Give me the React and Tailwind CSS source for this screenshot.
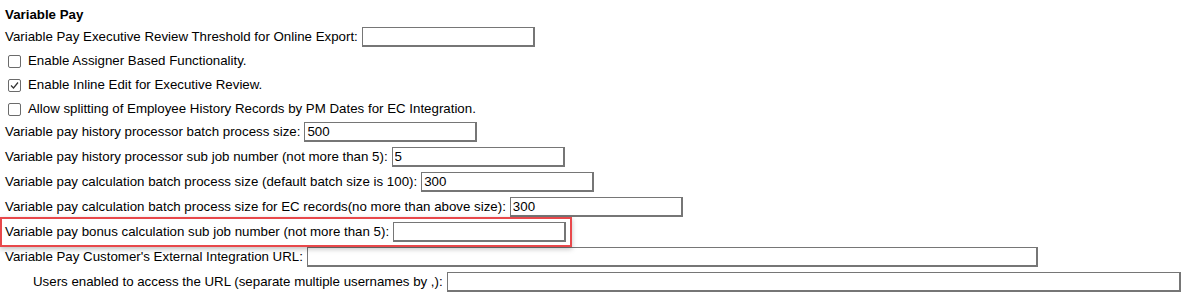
import React from 'react'

const font = { fontFamily: '"Liberation Sans", Arial, sans-serif' }

function Box({ checked }) {
  return (
    <span className="inline-flex w-[13px] h-[13px] border border-[#6b6b6b] rounded-[2px] bg-white items-center justify-center">
      {checked && (
        <svg width="11" height="11" viewBox="0 0 11 11">
          <polyline points="2,5.5 4.5,8 9,2.5" fill="none" stroke="#333" strokeWidth="1.2" />
        </svg>
      )}
    </span>
  )
}

function Field({ value = '', w = 'w-[173px]' }) {
  return (
    <input
      readOnly
      value={value}
      className={`${w} h-[20px] bg-white border border-[#767676] border-r-2 border-b-2 px-[2px] text-[13.3px] text-black outline-none`}
      style={font}
    />
  )
}

function Row({ label, value, w, indent }) {
  return (
    <div className={`flex items-center h-[25px] gap-[4px] ${indent ? 'pl-[28px]' : ''}`}>
      <span>{label}</span>
      <Field value={value} w={w} />
    </div>
  )
}

function Check({ label, checked }) {
  return (
    <div className="flex items-center h-[24px] pl-[3px] gap-[7px]">
      <Box checked={checked} />
      <span>{label}</span>
    </div>
  )
}

export default function App() {
  return (
    <div className="bg-white w-[1189px] h-[299px] pl-[5px] pt-[6px] text-[13.3px] text-black" style={font}>
      <div className="font-bold leading-[18px]">Variable Pay</div>
      <div className="flex items-center h-[20px] mt-[3px] gap-[4px]">
        <span>Variable Pay Executive Review Threshold for Online Export:</span>
        <Field />
      </div>
      <div className="mt-[2px]">
        <Check label="Enable Assigner Based Functionality." />
        <Check label="Enable Inline Edit for Executive Review." checked />
        <Check label="Allow splitting of Employee History Records by PM Dates for EC Integration." />
      </div>
      <div className="-mt-[2px]">
        <Row label="Variable pay history processor batch process size:" value="500" />
        <Row label="Variable pay history processor sub job number (not more than 5):" value="5" />
        <Row label="Variable pay calculation batch process size (default batch size is 100):" value="300" />
        <Row label="Variable pay calculation batch process size for EC records(no more than above size):" value="300" />
        <div className="relative">
          <Row label="Variable pay bonus calculation sub job number (not more than 5):" />
          <div className="absolute -left-[5px] -top-[2px] w-[572px] h-[30px] border-2 border-[#e8484b] shadow-[0_2px_5px_rgba(0,0,0,0.25)] pointer-events-none" />
        </div>
        <Row label="Variable Pay Customer's External Integration URL:" w="w-[731px]" />
        <Row label="Users enabled to access the URL (separate multiple usernames by ,):" w="w-[734px]" indent />
      </div>
    </div>
  )
}
